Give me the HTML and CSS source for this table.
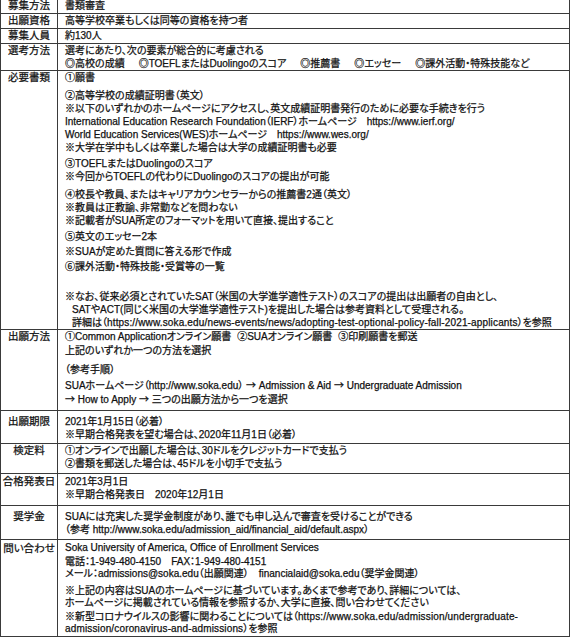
FILE: index.html
```html
<!DOCTYPE html>
<html lang="ja">
<head>
<meta charset="utf-8">
<title>SUA 出願要項</title>
<link rel="stylesheet" href="styles.css">
</head>
<body>
<table class="sheet">
  <colgroup><col class="c-label"><col class="c-body"></colgroup>
  <tr class="r-tight">
    <td class="label">募集方法</td>
    <td class="body"><div class="ln">書類審査</div></td>
  </tr>
  <tr class="r-tight">
    <td class="label">出願資格</td>
    <td class="body"><div class="ln">高等学校卒業もしくは同等の資格を持つ者</div></td>
  </tr>
  <tr class="r-tight">
    <td class="label">募集人員</td>
    <td class="body"><div class="ln">約130人</div></td>
  </tr>
  <tr class="r-flat">
    <td class="label">選考方法</td>
    <td class="body">
      <div class="ln">選考にあたり、次の要素が総合的に考慮される</div>
      <div class="ln">◎高校の成績<span class="gap"></span>◎TOEFLまたはDuolingoのスコア<span class="gap"></span>◎推薦書<span class="gap"></span>◎エッセー<span class="gap"></span>◎課外活動・特殊技能など</div>
    </td>
  </tr>
  <tr class="r-docs">
    <td class="label">必要書類</td>
    <td class="body">
      <div class="ln">①願書</div>
      <div class="ln m5">②高等学校の成績証明書（英文）</div>
      <div class="ln">※以下のいずれかのホームページにアクセスし、英文成績証明書発行のために必要な手続きを行う</div>
      <div class="ln">International Education Research Foundation（IERF）ホームページ　https://www.ierf.org/</div>
      <div class="ln">World Education Services(WES)ホームページ　https://www.wes.org/</div>
      <div class="ln">※大学在学中もしくは卒業した場合は大学の成績証明書も必要</div>
      <div class="ln m3">③TOEFLまたはDuolingoのスコア</div>
      <div class="ln">※今回からTOEFLの代わりにDuolingoのスコアの提出が可能</div>
      <div class="ln m5">④校長や教員、またはキャリアカウンセラーからの推薦書2通（英文）</div>
      <div class="ln">※教員は正教諭、非常勤などを問わない</div>
      <div class="ln">※記載者がSUA所定のフォーマットを用いて直接、提出すること</div>
      <div class="ln m3">⑤英文のエッセー2本</div>
      <div class="ln m2">※SUAが定めた質問に答える形で作成</div>
      <div class="ln m2">⑥課外活動・特殊技能・受賞等の一覧</div>
      <div class="ln m17">※なお、従来必須とされていたSAT（米国の大学進学適性テスト）のスコアの提出は出願者の自由とし、</div>
      <div class="ln indent">SATやACT(同じく米国の大学進学適性テスト)を提出した場合は参考資料として受理される。</div>
      <div class="ln indent">詳細は（<span class="url">https://www.soka.edu/news-events/news/adopting-test-optional-policy-fall-2021-applicants</span>）を参照</div>
    </td>
  </tr>
  <tr class="r-apply">
    <td class="label">出願方法</td>
    <td class="body">
      <div class="ln">①Common Applicationオンライン願書<span class="gap-s"></span>②SUAオンライン願書<span class="gap-s"></span>③印刷願書を郵送</div>
      <div class="ln m1">上記のいずれか一つの方法を選択</div>
      <div class="ln m6">（参考手順）</div>
      <div class="ln m2">SUAホームページ（http://www.soka.edu） <span class="arw">→</span> Admission &amp; Aid <span class="arw">→</span> Undergraduate Admission</div>
      <div class="ln"><span class="arw">→</span> How to Apply <span class="arw">→</span> 三つの出願方法から一つを選択</div>
    </td>
  </tr>
  <tr class="r-deadline">
    <td class="label">出願期限</td>
    <td class="body">
      <div class="ln">2021年1月15日（必着）</div>
      <div class="ln">※早期合格発表を望む場合は、2020年11月1日（必着）</div>
    </td>
  </tr>
  <tr class="r-fee">
    <td class="label">検定料</td>
    <td class="body">
      <div class="ln">①オンラインで出願した場合は、30ドルをクレジットカードで支払う</div>
      <div class="ln">②書類を郵送した場合は、45ドルを小切手で支払う</div>
    </td>
  </tr>
  <tr class="r-result">
    <td class="label">合格発表日</td>
    <td class="body">
      <div class="ln">2021年3月1日</div>
      <div class="ln">※早期合格発表日　2020年12月1日</div>
    </td>
  </tr>
  <tr class="r-scholar">
    <td class="label">奨学金</td>
    <td class="body">
      <div class="ln">SUAには充実した奨学金制度があり、誰でも申し込んで審査を受けることができる</div>
      <div class="ln">（参考 http://www.soka.edu/admission_aid/financial_aid/default.aspx）</div>
    </td>
  </tr>
  <tr class="r-contact">
    <td class="label">問い合わせ</td>
    <td class="body">
      <div class="ln tight">Soka University of America, Office of Enrollment Services</div>
      <div class="ln tight m1">電話：1-949-480-4150　FAX：1-949-480-4151</div>
      <div class="ln tight">メール：admissions@soka.edu（出願関連）　financialaid@soka.edu（奨学金関連）</div>
      <div class="ln tight m4">※上記の内容はSUAのホームページに基づいています。あくまで参考であり、詳細については、</div>
      <div class="ln tight">ホームページに掲載されている情報を参照するか、大学に直接、問い合わせてください</div>
      <div class="ln tight m1">※新型コロナウイルスの影響に関わることについては（<span class="url">https://www.soka.edu/admission/undergraduate-</span></div>
      <div class="ln tight"><span class="url">admission/coronavirus-and-admissions</span>）を参照</div>
    </td>
  </tr>
</table>
</body>
</html>
```

FILE: styles.css
```css
html, body {
  margin: 0;
  padding: 0;
  background: #ffffff;
}

body {
  font-family: "Liberation Sans", "Noto Sans CJK JP", sans-serif;
  color: #111111;
  font-feature-settings: "palt";
  -webkit-text-stroke: 0.25px #111111;
}

.sheet {
  border-collapse: collapse;
  table-layout: fixed;
  width: 570px;
  margin-top: -2px;
}

.c-label { width: 57px; }

.sheet td {
  border: 1px solid #3a3a3a;
  vertical-align: top;
  padding: 0 0 1px 0;
}

.label {
  font-size: 10.5px;
  line-height: 13px;
  text-align: center;
  white-space: nowrap;
}

.body {
  font-size: 10px;
  padding-left: 7px !important;
}

.ln {
  line-height: 13px;
  white-space: nowrap;
}

.ln.tight { line-height: 12.5px; }

.indent { padding-left: 7px; }

.gap {
  display: inline-block;
  width: 14px;
}

.gap-s {
  display: inline-block;
  width: 6px;
}

.arw {
  font-family: "Noto Sans CJK JP", sans-serif;
}

.url { letter-spacing: 0.15px; }

.m1 { margin-top: 1px; }
.m2 { margin-top: 2px; }
.m3 { margin-top: 3px; }
.m4 { margin-top: 4px; }
.m5 { margin-top: 5px; }
.m6 { margin-top: 6px; }
.m17 { margin-top: 17px; }

.sheet .r-tight td { padding-top: 0; padding-bottom: 1px; }
.sheet .r-flat td { padding-top: 0; padding-bottom: 0; }
.sheet .r-docs td { padding-top: 0; padding-bottom: 0; }
.sheet .r-apply td { padding-top: 0; padding-bottom: 4px; }
.sheet .r-deadline td { padding-top: 4px; padding-bottom: 2px; }
.sheet .r-fee td { padding-top: 0; padding-bottom: 3px; }
.sheet .r-result td { padding-top: 1px; padding-bottom: 4px; }
.sheet .r-scholar td { padding-top: 4px; padding-bottom: 3px; }
.sheet .r-contact td { padding-top: 2px; padding-bottom: 0; }
```
